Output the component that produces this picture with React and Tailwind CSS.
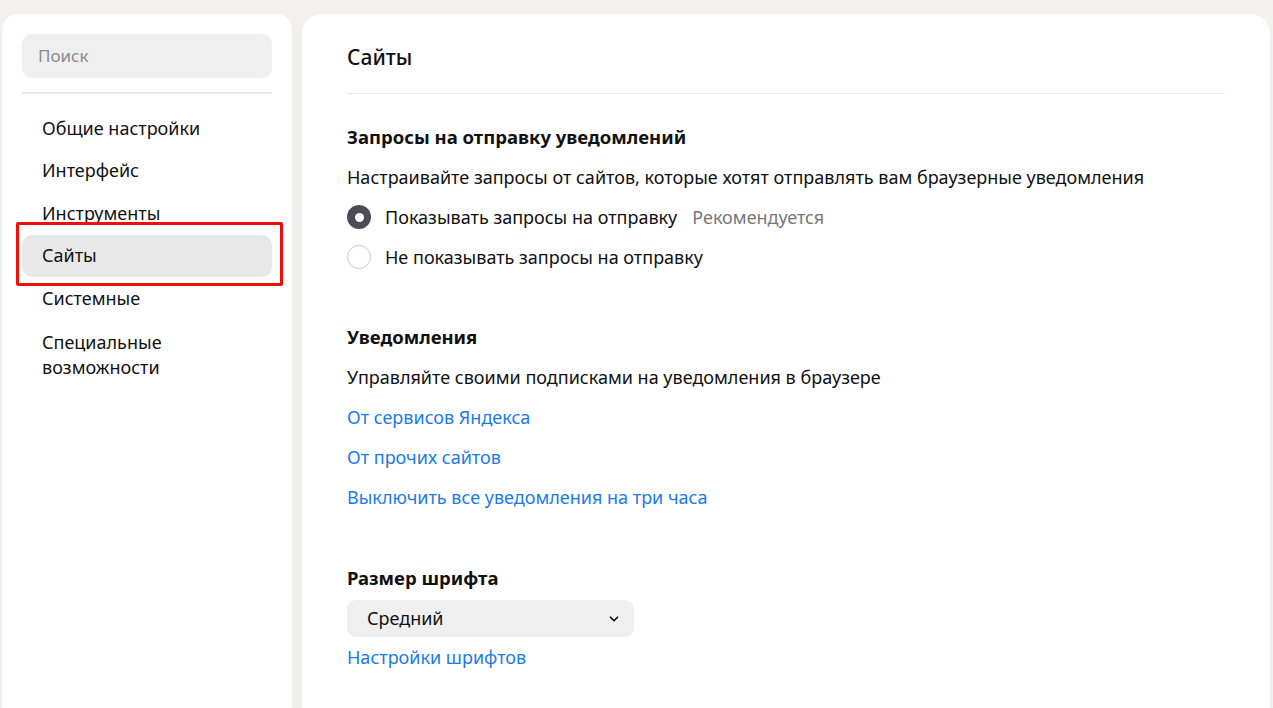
import { ChevronDown } from 'lucide-react';

const MENU = [
  { label: 'Общие настройки' },
  { label: 'Интерфейс' },
  { label: 'Инструменты' },
  { label: 'Сайты', active: true },
  { label: 'Системные' },
  { label: 'Специальные возможности', wrap: true },
];

function Radio({ checked }) {
  return checked ? (
    <span className="w-6 h-6 rounded-full bg-[#4d4c56] flex items-center justify-center shrink-0">
      <span className="w-[9px] h-[9px] rounded-full bg-white" />
    </span>
  ) : (
    <span className="w-6 h-6 rounded-full border border-[#c9c9c9] bg-white shrink-0" />
  );
}

export default function App() {
  return (
    <div
      className="w-[1273px] h-[708px] bg-[#f2f1ef] flex gap-[10px] pl-[2px] pt-[14px] overflow-hidden text-[#111]"
      style={{ fontFamily: '"Noto Sans", "Open Sans", sans-serif' }}
    >
      {/* Sidebar */}
      <aside className="w-[290px] shrink-0 bg-white rounded-t-[16px] px-5 pt-5">
        <div className="h-11 rounded-[10px] bg-[#efefef] flex items-center px-4 text-[17px] text-[#8b8b8b]">
          Поиск
        </div>
        <div className="h-[2px] bg-[#e9e9e9] mt-[14px] mb-[13px]" />
        <nav className="flex flex-col">
          {MENU.map(({ label, active, wrap }) => (
            <div key={label} className="relative">
              <div
                className={`px-5 text-[18px] leading-[25px] ${wrap ? 'pt-[10px] pb-[4px] w-[180px]' : 'h-[42.5px] flex items-center'} ${active ? 'bg-[#e8e8e8] rounded-[10px]' : ''}`}
              >
                {label}
              </div>
              {active && (
                <div className="absolute -left-[6px] -right-[11px] -top-[13px] -bottom-[9px] border-[3px] border-[#f20d0d] rounded-[2px] pointer-events-none" />
              )}
            </div>
          ))}
        </nav>
      </aside>

      {/* Main */}
      <main className="relative w-[968px] shrink-0 bg-white rounded-t-[20px] pl-[45px] pr-[45px] pt-[29px]">
        <h1 className="text-[21px] font-medium leading-[28px]">Сайты</h1>
        <div className="h-px bg-[#e5e5e5] mt-[22px]" />

        <section className="mt-[30px]">
          <h2 className="text-[18.5px] font-bold leading-[26px]">Запросы на отправку уведомлений</h2>
          <p className="text-[18px] leading-[26px] mt-[14px]">
            Настраивайте запросы от сайтов, которые хотят отправлять вам браузерные уведомления
          </p>
          <div className="flex flex-col gap-[14px] mt-[14px]">
            <label className="flex items-center gap-[14px] text-[18px] leading-[26px]">
              <Radio checked />
              <span>Показывать запросы на отправку</span>
              <span className="text-[#777] ml-[1px]">Рекомендуется</span>
            </label>
            <label className="flex items-center gap-[14px] text-[18px] leading-[26px]">
              <Radio />
              <span>Не показывать запросы на отправку</span>
            </label>
          </div>
        </section>

        <section className="mt-[54px]">
          <h2 className="text-[18.5px] font-bold leading-[26px]">Уведомления</h2>
          <p className="text-[18px] leading-[26px] mt-[14px]">
            Управляйте своими подписками на уведомления в браузере
          </p>
          <div className="flex flex-col gap-[14px] mt-[14px] text-[18px] leading-[26px] text-[#1a7be6]">
            <a>От сервисов Яндекса</a>
            <a>От прочих сайтов</a>
            <a>Выключить все уведомления на три часа</a>
          </div>
        </section>

        <section className="mt-[55px]">
          <h2 className="text-[18.5px] font-bold leading-[26px]">Размер шрифта</h2>
          <div className="w-[287px] h-[37px] mt-[9px] rounded-[9px] bg-[#efefef] flex items-center justify-between pl-5 pr-[13px] text-[18px]">
            <span>Средний</span>
            <ChevronDown size={14} strokeWidth={3} />
          </div>
          <a className="block text-[18px] leading-[26px] text-[#1a7be6] mt-[7px]">Настройки шрифтов</a>
        </section>
      </main>
    </div>
  );
}
